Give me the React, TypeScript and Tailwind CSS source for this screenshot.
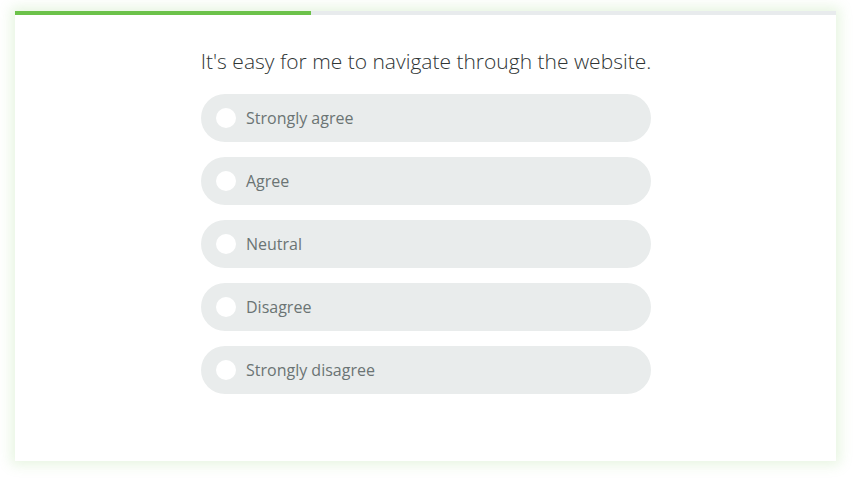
import React from "react";

const options = ["Strongly agree", "Agree", "Neutral", "Disagree", "Strongly disagree"];

export default function App() {
  return (
    <div className="w-[857px] h-[478px] bg-white pt-[11px] pl-[15px]" style={{ fontFamily: '"Open Sans", sans-serif' }}>
      <div className="w-[821px] h-[450px] bg-white shadow-[0_0_12px_4px_rgba(120,200,90,0.18)] flex flex-col">
        <div className="h-[4px] bg-[#e8ebed] flex">
          <div className="w-[296px] h-full bg-[#6cc24a]" />
        </div>
        <div className="flex flex-col items-center pt-[31px]">
          <h1 className="text-[21px] leading-[30px] font-light text-[#2f3535] ml-[1px]">
            It's easy for me to navigate through the website.
          </h1>
          <div className="mt-[18px] flex flex-col gap-[15px] ml-[1px]">
            {options.map((o) => (
              <div key={o} className="w-[450px] h-[48px] rounded-full bg-[#e9ecec] flex items-center pl-[15px]">
                <span className="w-[20px] h-[20px] rounded-full bg-white shrink-0" />
                <span className="ml-[10px] text-[16px] text-[#6b7474]">{o}</span>
              </div>
            ))}
          </div>
        </div>
      </div>
    </div>
  );
}
